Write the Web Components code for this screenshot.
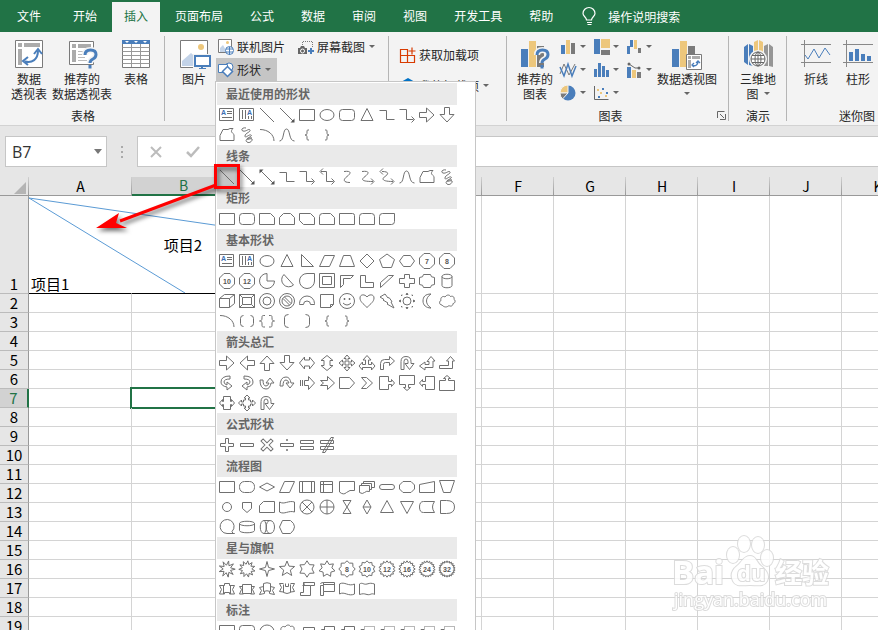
<!DOCTYPE html>
<html lang="zh-CN">
<head>
<meta charset="utf-8">
<title>Excel</title>
<style>
html, body {
  margin: 0;
  height: 100%;
  overflow: hidden;
}
body {
  font: 12px/15px "Noto Sans CJK SC", sans-serif;
  color: #262626;
}
</style>
</head>
<body>
<excel-app></excel-app>

<script>
var BLUE = "#4a7ebb", TAN = "#edc77c", GREY = "#7a7a7a";

// Small outline shapes, drawn on a 20x20 cell.
// A string that starts with "M" is path data, anything else is svg markup.
var poly = pts => "M" + pts.map(p => p.map(n => n.toFixed(2)).join(" ")).join("L") + "z";

var star = function(n, outer, inner, turn = 0, cx = 10, cy = 10) {
  var pts = [];
  for (var i = 0; i < n * 2; i++) {
    var r = i % 2 ? inner : outer;
    var a = Math.PI * i / n - Math.PI / 2 + turn;
    pts.push([cx + r * Math.cos(a), cy + r * Math.sin(a)]);
  }
  return poly(pts);
};

var path = (d, extra = "") => `<path d="${d}" ${extra}/>`;
var label = t => `<text x="10" y="12.5" text-anchor="middle">${t}</text>`;
var octagon = "M7 2.5h6l4.5 4.5v6l-4.5 4.5h-6l-4.5-4.5v-6z";
var numbered = t => path(octagon) + label(t);
var seal = (n, t) => path(star(n, 8.2, 6.4)) + label(t);
var turned = (deg, d) => `<g transform="rotate(${deg} 10 10)">${path(d)}</g>`;

var textbox = path("M2.5 3.5h14v12h-14zM10 6.5h5M10 8.5h5M5 12.5h10") + `<text x="4" y="10" class="a">A</text>`;
var vtextbox = path("M2.5 3.5h14v12h-14zM5.5 5v9M8.5 5v9M11.5 11v3M14.5 11v3") + `<text x="10" y="10" class="a">A</text>`;
var right = "M2.5 7.5h7v-4.5l7.5 7-7.5 7v-4.5h-7z";
var line = "M3 3l14 14";
var lineArrow = path(line) + path("M17.5 17.5h-4l4-4z", 'class="f"');
var elbow = "M2.5 5.5h7v9h8";
var elbowArrow = "M2.5 4.5h7v10h7M14.5 11.5l3 3-3 3";
var elbowBoth = "M4 4.5h5.5v10h7M14.5 11.5l3 3-3 3M6 1.5l-3 3 3 3";
var curve = "M7 4.5c8-1 7 2 3 5s-4 6 3 6";
var curveArrow = "M5 4.5c8-1 7 2 3 5s-4 5 8 5M14 11.5l3 3-3 3";
var curveBoth = "M5 4.5c8 0 6 3 3 5s-4 5 8 5M14 11.5l3 3-3 3M6 1.5l-3 3 3 3";
var freeform = "M3 10.5l3-6h5l2-1h3c-3 3-1 4 1 6v6h-14z";
var scribble = "M9 3c-3-1-6 2-3 3s6-3 7-1-5 3-5 6 4-2 6-1-4 3-4 4 4-1 5 0-2 5-5 3 2-5 5-4";
var arc = "M3 4.5c8 0 14 5 14 11.500";
var wave = "M2.5 16c5 0 3-12 7-12s2 12 8 12";
var lbrace = "M12 5c-2 0-2 0-2 2s0 3-2 3c2 0 2 1 2 3s0 2 2 2";
var rbrace = "M8 5c2 0 2 0 2 2s0 3 2 3c-2 0-2 1-2 3s0 2-2 2";
var rect = "M2.5 4.5h15v11h-15z";
var rounded = '<rect x="2.5" y="4.5" width="15" height="11" rx="3"/>';
var ellipse = '<ellipse cx="10" cy="10" rx="7" ry="5.5"/>';
var triangle = "M10 3.5l6 12h-12z";
var cloud = "M5 14c-3 0-3-4-1-4.500c-1-3 2-5 4-3.500c2-3 5-2 5.500-.5c3-1 4 1 3.500 3c2 1 1 4-1 4c0 3-3 3-4 2c-2 2-5 2-7-.5z";
var uturn = "M4 16.5v-8q0-5 5-5t5 5v2h3l-4.500 6-4.500-6h3v-2q0-2.500-2-2.500t-2 2.500v8z";
var bend = "M3.5 16.5v-6q0-4 4-4h5v-3l5 4.500-5 4.500v-3h-4q-2 0-2 2v5z";
var swoop = "M13 3q-9 0-9 6 0 4 6 5v3l5-4-5-4v3q-3-1-3-3 0-3 6-3z";
var ribbon = "M2.5 6.5h5v-2h5v2h5l-2 4 2 4.500h-5v-1.500h-5v1.500h-5l2-4.500zM6.500 6.500v8.500M13.500 6.500v8.500";
var banner = "M5.5 5.5h9v9h-9zM5.500 7.500h-3l2 3-2 4.500h4v-1M14.500 7.500h3l-2 3 2 4.500h-4v-1";
var lineCallout = path("M6.5 6.5h11v9h-11zM6.500 9.500h-3v7");
var lineCallout2 = path("M7.5 5.5h10v9h-10zM7.500 8.500h-3l-2 7");
var dashedCallout = path("M7.5 5.5h10v9h-10z", 'stroke-dasharray="1 1"') + path("M7 8.500h-3l-2 7");

var SECTIONS = [
  ["最近使用的形状", [
    textbox, vtextbox, line, lineArrow, rect, ellipse, rounded, triangle, elbow, elbowArrow, right, turned(90, right),
    freeform, scribble, arc, wave, lbrace, rbrace
  ]],
  ["线条", [line, lineArrow, lineArrow + path("M2.5 2.5h4l-4 4z", 'class="f"'), elbow, elbowArrow, elbowBoth, curve, curveArrow, curveBoth, wave, freeform, scribble]],
  ["矩形", [
    rect, rounded, "M2.5 4.5h11l4 4v7h-15z", "M6.5 4.5h7l4 4v7h-15v-7z", "M2.5 4.5h11l4 4v7h-11l-4-4z",
    "M5.5 4.5h8l4 4v7h-15v-8q0-3 3-3z", "M2.5 4.5h13q2 0 2 2v9h-15z",
    "M5.5 4.5h9q3 0 3 3v8h-15v-8q0-3 3-3z", "M5.5 4.5h12v8q0 3-3 3h-12v-8q0-3 3-3z"
  ]],
  ["基本形状", [
    textbox, vtextbox, ellipse, triangle, "M4.5 3.5v12h12z", "M7.5 4.5h10l-5 11h-10z", "M6.5 4.5h7l4 11h-15z",
    "M10 3l7 7-7 7-7-7z", "M10 3l7.500 5.500-3 8h-9l-3-8z", "M6.5 4.5h7l4 5.500-4 5.500h-7l-4-5.500z", numbered(7), numbered(8),
    numbered(10), numbered(12), "M10 2.5a7.500 7.500 0 1 0 7.500 7.500h-7.500z", "M7 3.5a7 7 0 1 0 9.500 10.500z", "M10 2.5h7.500v7.500a7.500 7.500 0 1 1-7.500-7.500z",
    "M2.5 2.5h15v14h-15zM5.500 5.500h9v8h-9z", "M3.5 4.5h13l-3 3h-7v6l-3 3z", "M3.5 4.5h5v7h8v5h-13z", "M3.5 11.5l8-7h5l-13 12z",
    "M7.5 3.5h5v4h5v5h-5v4h-5v-4h-5v-5h5z", "M6.5 3.5h7q0 3 4 3v7q-4 0-4 3h-7q0-3-4-3v-7q4 0 4-3z",
    "M5 5.5v9c0 3 10 3 10 0v-9c0-3-10-3-10 0c0 3 10 3 10 0",
    "M2.5 7.5h10v9h-10zM2.5 7.5l5-4h10l-5 4M17.5 3.5v9l-5 4", "M2.5 3.5h15v13h-15zM5.500 6.500h9v7h-9zM2.500 3.500l3 3M17.500 3.500l-3 3M2.500 16.500l3-3M17.500 16.500l-3-3",
    '<circle cx="10" cy="10" r="7.5"/><circle cx="10" cy="10" r="4"/>', '<circle cx="10" cy="10" r="7.5"/><circle cx="10" cy="10" r="5"/><path d="M6 7.5l6.500 6.500M7.500 6l6.500 6.500"/>',
    "M2.5 13.5v-1a7.500 7.500 0 0 1 15 0v1h-4a3.500 3.500 0 0 0-7 0z", "M3.5 3.5h13v10l-3 3h-10zM13.500 16.500v-3h3",
    '<circle cx="10" cy="10" r="7.5"/><path d="M6 12q4 4 8 0M7 7.500h1v1h-1zM12 7.500h1v1h-1z"/>',
    "M10 16.5c-4-4-7-6-7-9.500c0-4 5-4 7-1c2-3 7-3 7 1c0 3.500-3 5.500-7 9.500z", "M3 6l5-3 3 4 1-.5 3 4-1 .5 3 6-7-4 1-1-5-3 1-.5z",
    '<circle cx="10" cy="10" r="4"/><path d="M9 3.500l1-1.500 1 1.500zM9 16.500l1 1.500 1-1.500zM3.500 9l-1.500 1 1.500 1zM16.500 9l1.500 1-1.500 1zM4.500 5v-1h1M14.500 4h1v1M4.500 15v1h1M15.500 15v1h-1"/>',
    "M14 3c-6 0-8 3-8 7s3 7 8 7c-6-4-6-10 0-14z", cloud,
    arc, "M6.5 4.5q-3 0-3 3v5q0 3 3 3M13.500 4.500q3 0 3 3v5q0 3-3 3", "M8 4.5c-3 0-3 0-3 2.500s-1 3-2.500 3c1.500 0 2.500 0 2.500 3s0 3 3 3M12 4.500c3 0 3 0 3 2.500s1 3 2.500 3c-1.500 0-2.500 0-2.500 3s0 3-3 3",
    "M11.5 3.5q-4 0-4 3v7q0 3 4 3", "M8.5 3.5q4 0 4 3v7q0 3-4 3", lbrace, rbrace
  ]],
  ["箭头总汇", [
    right, turned(180, right), turned(270, right), turned(90, right), "M2.5 10l5-6v3h5v-3l5 6-5 6v-3h-5v3z", turned(90, "M2.5 10l5-6v3h5v-3l5 6-5 6v-3h-5v3z"),
    "M10 2l3 3.500h-2v3.500h3.500v-2l3.500 3-3.500 3v-2h-3.500v3.500h2l-3 3.500-3-3.500h2v-3.500h-3.500v2l-3.500-3 3.500-3v2h3.500v-3.500h-2z",
    "M10 2.5l4 4.500h-2.500v4.500h3v-2.500l3.500 4-3.500 4v-2.500h-9v2.500l-3.500-4 3.500-4v2.500h3v-4.500h-2.500z", bend, uturn,
    "M14 3.5l4 4.500h-2v6.500h-8v2.500l-5.500-4 5.500-4v2.500h4v-3h-2z", "M13.5 3.5l4 4.500h-2v7.500h-13v-3h9v-4.500h-2z",
    swoop, `<g transform="matrix(-1 0 0 1 20 0)">${path(swoop)}</g>`, turned(270, swoop), `<g transform="matrix(0 1 1 0 0 0)">${path(swoop)}</g>`,
    "M7.5 7.5h4v-4l6 6.500-6 6.500v-4h-4zM3.500 7v6M5.500 7v6", "M3.5 7.5h7v-4l7 6.500-7 6.500v-4h-7l3-2.500z", "M2.5 4.5h10l5 5.500-5 5.500h-10z", "M4.5 4.5h5l6 5.500-6 5.500h-5l5-5.500z",
    "M2.5 3.5h9v5h3v-2l3 3.500-3 3.500v-2h-3v5h-9z", "M2.5 2.5h15v9h-6v3h2l-3.500 3-3.500-3h2v-3h-6z", "M17.5 3.5h-9v5h-3v-2l-3 3.500 3 3.500v-2h3v5h9z", "M2.5 17.5h15v-10h-6v-2h2l-3.500-3-3.500 3h2v2h-6z",
    "M6.5 3.5h7v5h1v-2l3 3.500-3 3.500v-2h-1v5h-7v-5h-1v2l-3-3.500 3-3.500v2h1z", "M10 2l3 3h-1.500v2h2v2h2v-2l3 3-3 3v-2h-2v2h-2v2h1.500l-3 3-3-3h1.500v-2h-2v-2h-2v2l-3-3 3-3v2h2v-2h2v-2h-1.500z", uturn
  ]],
  ["公式形状", [
    "M8.5 3.5h3v5h5v3h-5v5h-3v-5h-5v-3h5z", "M3.5 8.5h13v3h-13z", turned(45, "M8.5 3h3v5.500h5.500v3h-5.500v5.500h-3v-5.500h-5.500v-3h5.500z"),
    "M3.5 8.5h13v3h-13zM9.500 4.500h1v1h-1zM9.500 14.500h1v1h-1z", "M3.5 5.5h13v3h-13zM3.500 11.500h13v3h-13z", "M3.5 5.5h13v3h-13zM3.500 11.500h13v3h-13zM14 2.500h2.500l-8.500 15h-2.500z"
  ]],
  ["流程图", [
    rect, '<rect x="2.5" y="4.5" width="15" height="11" rx="5"/>', "M2.5 10l7.500-4 7.500 4-7.500 4z", "M7.5 4.5h10l-5 11h-10z", "M2.5 4.5h15v11h-15zM5.500 4.500v11M14.500 4.500v11", "M3.5 4.5h12v11h-12zM6.500 4.500v11M3.500 7.500h12",
    "M2.5 4.5h15v9q-5-1-8 2t-7-.5z", "M2.5 8.5h10v6q-3-1-5 1t-5 0zM4.500 8v-1.500h10v6h-2M6.500 6v-1.500h11v6h-2.500", '<rect x="2.5" y="7.5" width="15" height="5" rx="2.5"/>',
    "M6 4.5h8l3.500 3.500v4l-3.500 3.500h-8l-3.500-3.500v-4z", "M2.5 7.5l15-3v11h-15z", "M2.5 3.5h15l-4 12h-7z",
    '<circle cx="10" cy="10" r="4.5"/>', "M5.5 5.5h9v6l-4.500 4-4.500-4z", "M6.5 4.5h11v11h-15v-7z", "M2.5 5c5 3 9-2 15 0v10c-6-2-10 3-15 0z",
    '<circle cx="10" cy="10" r="7"/><path d="M5 5l10 10M15 5l-10 10"/>', '<circle cx="10" cy="10" r="7"/><path d="M10 3v14M3 10h14"/>', "M6 3.5h8l-8 13h8z",
    "M10 3l4 7-4 7-4-7zM6 10h8", "M10 3.5l6.500 12h-13z", "M3.5 4.5h13l-6.500 12z", "M6.5 4.5h11q-4 5.500 0 11h-11q-4 0-4-5.500t4-5.500z", "M3.5 3.5h6q8 0 8 6.500t-8 6.500h-6z",
    "M10 16.5a7 7 0 1 1 5-2l1 2h1.500M10 16.500h7.500", "M2.5 6.5v7c0 3 15 3 15 0v-7c0-3-15-3-15 0c0 3 15 3 15 0", "M7 3.5h6c6 0 6 13 0 13h-6c-5 0-5-13 0-13M13 3.5c-5 0-5 13 0 13M7 3.5c3 2 3 11 0 13", "M5.5 3.5h8q8 6 0 13h-8l-3-6.500z"
  ]],
  ["星与旗帜", [
    star(9, 8.2, 3.8, .2), star(11, 8.2, 4.8, .1), star(4, 7.5, 2.2), star(5, 8, 3.5), star(6, 8.2, 5), star(7, 8.2, 5),
    seal(8, 8), seal(10, 10), seal(14, 12), seal(16, 16), seal(19, 24), seal(22, 32),
    ribbon, banner, "M6.5 4.5q3.500-1.500 7 0v8q-3.500-1.500-7 0zM6.500 7.500l-4 1 2 3-2 4 5-1v-2M13.500 7.500l4 1-2 3 2 4-5-1v-2", "M6.5 5.5v8q3.500 2 7 0v-8M6.500 4.500h-4l2 4-2 4 4 .5M13.500 4.500h4l-2 4 2 4-4 .5M8.500 4.500v3h3v-3",
    "M6.5 3.5h11v3h-4v10h-10v-3h3zM6.500 3.500q2 3-1 3M6.500 6.500h7", "M3.5 6.5h3v-3h11v9h-11v4h-3zM6.500 6.500v6M3.500 5q0-1.500 3-1.500M6.500 5.500h11",
    "M2.5 5c5-3 9 3 15 0v10c-6 3-10-3-15 0z", "M2.5 5c3-2 4 1 7.500 0s4-1 7.500 0v10.500c-3-2-4 1-7.500 0s-4-1-7.500 0z"
  ]],
  ["标注", [
    rect, rounded, '<ellipse cx="10" cy="10.5" rx="7" ry="6.5"/>', cloud, lineCallout, lineCallout2, lineCallout2,
    dashedCallout, dashedCallout, dashedCallout, dashedCallout, dashedCallout
  ]]
];

// Ribbon pictures. Values hold [width, height, markup].
var pivotArrows = `<path d="M11 22.500c7 2 13-2 13-11" fill="none" stroke="${BLUE}" stroke-width="2"/><path d="M20 15l4-5 4 5M14 18l-5 4 5 4" fill="none" stroke="${BLUE}" stroke-width="2"/>`;
var question = x => `<g transform="translate(${x} 10)"><path d="M2 6q0-5 5.500-5t5.500 4.500q0 3-3 4.500t-3 4" fill="none" stroke="#f3f3f3" stroke-width="6"/><path d="M2 6q0-5 5.500-5t5.500 4.500q0 3-3 4.500t-3 4M7 16v3.500" fill="none" stroke="${BLUE}" stroke-width="3"/></g>`;
var bars = `<path d="M1 10h7v18h-7z" fill="${BLUE}"/><path d="M9 2h7v26h-7z" fill="${TAN}"/><path d="M17 7h7v21h-7z" fill="${GREY}"/>`;

var ICONS = {
  pivot: [30, 30, `<path d="M1.500 1.500h27v27h-27z" fill="#fff" stroke="${GREY}"/><path d="M4 4h4v4h-4zM10 4h16v4h-16zM4 10h4v16h-4z" fill="#ababab"/>${pivotArrows}`],
  pivotHelp: [30, 30, `<path d="M2.500 2.500h24v23h-24z" fill="#fff" stroke="${GREY}"/><path d="M5 5h4v4h-4zM11 5h13v4h-13zM5 11h4v12h-4z" fill="#ababab"/><path d="M11 12.500h9M11 15.500h7M11 18.500h7M11 21.500h9" stroke="#bbb"/>${question(16)}`],
  table: [30, 30, `<path d="M1.500 1.500h27v27h-27z" fill="#fff" stroke="${GREY}"/><path d="M1.500 8.500h27M1.500 12.500h27M1.500 16.500h27M1.500 20.500h27M1.500 24.500h27M10.500 4v24M19.500 4v24" stroke="#999"/><path d="M1 1h28v4h-28z" fill="${BLUE}"/><path d="M4 2h4l-2 2zM13 2h4l-2 2zM22 2h4l-2 2z" fill="#fff"/>`],
  picture: [32, 30, `<path d="M2.500 1.500h27v27h-27z" fill="#fff" stroke="${GREY}"/><circle cx="23" cy="8" r="3" fill="${TAN}"/><path d="M4 27v-5l9-8 9 8v5z" fill="#c3d3e8"/><path d="M15 15h18v16h-18z" fill="#f3f3f3"/><path d="M17 17h15v10h-15z" fill="#fff" stroke="${BLUE}" stroke-width="2"/><path d="M23 27h2v2h3v1h-7v-1h2z" fill="${BLUE}"/>`],
  online: [16, 16, `<path d="M.5 .5h13v13h-13z" fill="#fff" stroke="${GREY}"/><circle cx="9.500" cy="3.500" r="1.500" fill="${TAN}"/><path d="M2 13v-4l3-3 4 7z" fill="#c3d3e8"/><circle cx="11.500" cy="11.500" r="4" fill="#fff" stroke="${BLUE}"/><path d="M8 10h7M8 13h7M11.500 8v8" stroke="${BLUE}"/>`],
  shapes: [16, 16, `<circle cx="11" cy="5" r="4" fill="#fff" stroke="${BLUE}"/><path d="M.5 2.500h9v8h-9z" fill="#fff" stroke="${BLUE}"/><path d="M9.500 4.500l5 5-5 5-5-5z" fill="#fff" stroke="${BLUE}" stroke-width="1.500"/>`],
  screenshot: [16, 16, `<path d="M4.500 8v-5.500h10v6" fill="none" stroke="${GREY}" stroke-dasharray="1 1"/><path d="M0 9h2l1-2h3l1 2h2v6h-9z" fill="#666"/><circle cx="4.500" cy="12" r="2" fill="#666" stroke="#fff"/><path d="M12 9h2v2h2v2h-2v2h-2v-2h-2v-2h2z" fill="${BLUE}"/>`],
  store: [16, 16, `<path d="M.5 2.500h7v13h-7zM.5 8.500h14v7h-14M12 .5v7M8.500 4h7" fill="none" stroke="#d83b01" stroke-width="1.200"/>`],
  addin: [16, 16, `<path d="M8 0l7 4v8l-7 4-7-4v-8z" fill="#0072c6"/>`],
  chartHelp: [30, 30, `${bars}${question(15)}`],
  column: [16, 16, `<path d="M1 6h4v9h-4z" fill="${BLUE}"/><path d="M6 1h4v14h-4z" fill="${TAN}"/><path d="M11 4h4v11h-4z" fill="${GREY}"/>`],
  tree: [16, 16, `<path d="M1 0h6v15h-6z" fill="${BLUE}"/><path d="M8 0h9v9h-9z" fill="${TAN}"/><path d="M8 11h9v5h-9z" fill="${GREY}"/>`],
  fall: [16, 16, `<path d="M1 7h3v8h-3zM4 1h3v7h-3z" fill="${BLUE}"/><path d="M8 1h3v9h-3z" fill="${TAN}"/><path d="M12 9h3v5h-3z" fill="${GREY}"/>`],
  lines: [16, 16, `<path d="M0 12l4-10 5 11 6-11" fill="none" stroke="${GREY}"/><path d="M0 5l4 9 4-12 4 12 4-10" fill="none" stroke="${BLUE}" stroke-width="1.500"/>`],
  histogram: [16, 16, `<path d="M1 7h3v8h-3zM5 1h3v14h-3zM9 4h3v11h-3zM13 8h3v7h-3z" fill="${BLUE}"/>`],
  combo: [16, 16, `<path d="M1 5h4v11h-4z" fill="${BLUE}"/><path d="M6 8h4v8h-4z" fill="${TAN}"/><path d="M11 10h4v6h-4z" fill="${GREY}"/><path d="M3 2l6 4h5" stroke="#666" fill="none"/><circle cx="3" cy="2" r="1.500" fill="#666"/><circle cx="13" cy="6" r="1.500" fill="#666"/>`],
  pie: [16, 16, `<circle cx="8" cy="8" r="7.500" fill="${BLUE}"/><path d="M8 8v-8a8 8 0 0 0-8 8z" fill="${TAN}" stroke="#f3f3f3"/><path d="M8 8h-8a8 8 0 0 0 2.500 6z" fill="${GREY}" stroke="#f3f3f3"/>`],
  scatter: [16, 16, `<path d="M1.500 1v13.500h14" fill="none" stroke="#666"/><path d="M9 3h2v2h-2zM13 7h2v2h-2zM5 11h2v2h-2z" fill="${BLUE}"/><path d="M4 4h2v2h-2zM7 7h2v2h-2zM12 10h2v2h-2z" fill="${TAN}"/>`],
  pivotChart: [32, 30, `${bars}<path d="M15.500 15.500h15v15h-15z" fill="#fff" stroke="${GREY}"/><path d="M17 17h3v3h-3zM21 17h8v3h-8zM17 21h3v8h-3z" fill="#ababab"/><path d="M21 26.500c4 1 6-1 6-4M25 24l2-2 2 2M23 24l-2 2 2 2" fill="none" stroke="${BLUE}" stroke-width="1.300"/>`],
  map: [30, 30, `<path d="M1 8l4-3v21l-4-3zM6 5l4 2v20l-4-1z" fill="${BLUE}"/><path d="M11 3l4-2v26l-4-2zM16 1l4 2v23l-4 1z" fill="${TAN}"/><path d="M21 7l4-2v22h-4zM26 5l4 3v20l-4-1z" fill="#969696"/><circle cx="15" cy="20" r="9" fill="#f3f3f3"/><circle cx="15" cy="20" r="7" fill="#fff" stroke="#666"/><ellipse cx="15" cy="20" rx="3" ry="7" fill="none" stroke="#666"/><path d="M8 20h14M9 16.500h12M9 23.500h12M15 13v14" stroke="#666"/>`],
  sparkLine: [30, 30, `<path d="M0 5.500h30M0 23.500h30M3.500 1v27" stroke="#888"/><path d="M4 16l3 4 6-10 5 9 6-10 5 7" fill="none" stroke="${BLUE}"/>`],
  sparkColumn: [30, 30, `<path d="M0 5.500h30M0 23.500h30M3.500 1v27" stroke="#888"/><path d="M6 13h4v9h-4zM12 10h4v12h-4zM18 15h4v7h-4zM24 17h4v5h-4z" fill="${BLUE}"/>`],
  bulb: [14, 17, `<path d="M4.500 12c0-3-3.500-3.500-3.500-6.500a5.500 5.500 0 0 1 12 0c0 3-3.500 3.500-3.500 6.500zM5 14.500h5M5.500 16.500h4" fill="none" stroke="#fff" stroke-width="1.200"/>`],
  launcher: [9, 9, `<path d="M.5 7v-6.500h7M3 3l4 4M8.500 3v5.500h-5.500" fill="none" stroke="#666"/>`],
  cancel: [12, 12, `<path d="M1 1l10 10M11 1l-10 10" stroke="#bcbcbc" stroke-width="2"/>`],
  accept: [14, 12, `<path d="M1 6l4 4 8-9" fill="none" stroke="#bcbcbc" stroke-width="2.500"/>`]
};

var define = function(name, render) {
  window.customElements.define(name, class extends HTMLElement {
    constructor() {
      super();
      this.attachShadow({ mode: "open" });
    }

    connectedCallback() {
      this.shadowRoot.innerHTML = render(this);
    }
  });
};

var caret = `<i class="caret"></i>`;
var caretStyle = `.caret { flex: none; border: 3px solid transparent; border-top-color: #666; border-bottom: 0; }`;
var buttonReset = `button { font: inherit; color: inherit; border: 0; margin: 0; padding: 0; background: none; }`;

define("x-icon", function(el) {
  var [w, h, markup] = ICONS[el.getAttribute("name")];
  return `<style>:host { display: block; flex: none; } svg { display: block; overflow: visible; }</style>
    <svg width="${w}" height="${h}" viewBox="0 0 ${w} ${h}" aria-hidden="true">${markup}</svg>`;
});

define("menu-tabs", function() {
  var tabs = ["开始", "插入", "页面布局", "公式", "数据", "审阅", "视图", "开发工具", "帮助"];
  return `<style>
    :host { display: block; background: #217346; color: #fff; }
    nav { display: flex; gap: 3px; height: 32px; padding-top: 2px; box-sizing: border-box; }
    ${buttonReset}
    button { padding: 0 12px 4px; white-space: nowrap; }
    .file { padding: 0 17px 4px; }
    .on { background: #f3f3f3; color: #217346; }
    .tell { display: flex; align-items: center; gap: 12px; padding: 0 0 2px 14px; }
  </style>
  <nav>
    <button class="file">文件</button>
    ${tabs.map(t => `<button${t == "插入" ? ' class="on"' : ""}>${t}</button>`).join("")}
    <button class="tell"><x-icon name="bulb"></x-icon><span>操作说明搜索</span></button>
  </nav>`;
});

define("ribbon-group", function(el) {
  var launcher = el.hasAttribute("launcher") ? `<button aria-label="图表选项"><x-icon name="launcher"></x-icon></button>` : "";
  return `<style>
    :host { display: flex; flex: none; flex-direction: column; box-sizing: border-box; padding: 3px 0 0;
      background: linear-gradient(#b5b5b5, #b5b5b5) no-repeat right 4px / 1px 85px; }
    :host([last]) { background: none; }
    ${buttonReset}
    .body { display: flex; align-items: flex-start; height: 72px; }
    footer { display: flex; align-items: center; height: 16px; }
    span { flex: 1; text-align: center; min-height: 15px; }
    :host([launcher]) span { padding-right: 8px; }
    button { width: 12px; }
  </style>
  <div class="body"><slot></slot></div>
  <footer><span>${el.getAttribute("label") || ""}</span>${launcher}</footer>`;
});

define("big-button", function(el) {
  return `<style>
    :host { display: block; flex: none; }
    ${buttonReset} ${caretStyle}
    button { display: flex; flex-direction: column; align-items: center; width: 100%; padding-top: 4px; }
    .text { margin-top: 2px; white-space: nowrap; display: flex; flex-direction: column; align-items: center; }
    .row { display: flex; align-items: center; gap: 5px; min-height: 15px; }
  </style>
  <button>
    <x-icon name="${el.getAttribute("icon")}"></x-icon>
    <span class="text"><slot></slot>
    ${el.hasAttribute("menu") ? `<span class="row"><slot name="second"></slot>${caret}</span>` : ""}</span>
  </button>`;
});

define("small-button", function(el) {
  return `<style>
    :host { display: block; }
    ${buttonReset} ${caretStyle}
    button { display: flex; align-items: center; gap: 3px; height: 23px; padding: 0 6px 0 2px; white-space: nowrap; }
    :host([open]) button { background: #c5c5c5; }
    .caret { margin-left: 1px; }
  </style>
  <button aria-label="${el.getAttribute("hint") || el.textContent}"><x-icon name="${el.getAttribute("icon")}"></x-icon><slot></slot>${el.hasAttribute("menu") ? caret : ""}</button>`;
});

define("shape-gallery", function() {
  var draw = s => s[0] == "M" ? path(s) : s;
  return `<style>
    :host { display: block; box-sizing: border-box; width: 261px; padding: 1px 0 0 1px; overflow: hidden;
      background: #fff; border: 1px solid #c6c6c6; border-bottom: 0; }
    h2 { margin: 0; width: 231px; padding-left: 9px; font-size: 12px; line-height: 22px; font-weight: 700; color: #666; background: #eaeaea; }
    div { display: flex; flex-wrap: wrap; width: 240px; }
    ${buttonReset}
    button { display: block; width: 20px; height: 20px; }
    .hot { background: #c5c5c5; }
    svg { display: block; fill: none; stroke: #707070; }
    .f { fill: #555; stroke: none; }
    text { stroke: none; fill: #555; font: bold 7px "Liberation Sans", sans-serif; }
    .a { fill: #3c6eb4; }
  </style>
  ${SECTIONS.map(([title, shapes]) => `<h2>${title}</h2><div>${
    shapes.map((s, i) => `<button aria-label="${title} ${i + 1}"${title == "线条" && !i ? ' class="hot"' : ""}><svg width="20" height="20" viewBox="0 0 20 20">${draw(s)}</svg></button>`).join("")
  }</div>`).join("")}`;
});

define("excel-ribbon", function() {
  var charts = [["column", "柱形图"], ["tree", "层次结构图"], ["fall", "瀑布图"], ["lines", "折线图"], ["histogram", "统计图"], ["combo", "组合图"], ["pie", "饼图"], ["scatter", "散点图"]];
  return `<style>
    :host { display: flex; height: 93px; background: #f3f3f3; border-bottom: 1px solid #d2d2d2; }
    .stack { display: flex; flex-direction: column; }
    .apps { gap: 8px; padding-top: 8px; }
    .charts { display: grid; grid-template-columns: repeat(3, 33px); }
    .tables { padding-left: 6px; padding-right: 5px; }
    .pictures { padding-left: 7px; width: 224px; }
    .addins { padding-left: 9px; width: 118px; }
    .plots { padding-left: 5px; width: 222px; }
    .demo { padding-left: 3px; padding-right: 3px; }
    .spark { padding-left: 8px; width: 132px; }
    .w42 { width: 42px; } .w44 { width: 44px; } .w46 { width: 46px; } .w48 { width: 48px; } .w52 { width: 52px; } .w60 { width: 60px; }
    .anchor { position: relative; width: 80px; }
    shape-gallery { position: absolute; z-index: 2; top: 100%; left: -1px; height: calc(100vh - 81px); }
  </style>
  <ribbon-group class="tables" label="表格">
    <big-button class="w46" icon="pivot"><span>数据</span><span>透视表</span></big-button>
    <big-button class="w60" icon="pivotHelp"><span>推荐的</span><span>数据透视表</span></big-button>
    <big-button class="w48" icon="table"><span>表格</span></big-button>
  </ribbon-group>
  <ribbon-group class="pictures">
    <big-button class="w44" icon="picture"><span>图片</span></big-button>
    <div class="stack">
      <small-button icon="online">联机图片</small-button>
      <div class="anchor">
        <small-button icon="shapes" menu open>形状</small-button>
        <shape-gallery></shape-gallery>
      </div>
    </div>
    <small-button icon="screenshot" menu>屏幕截图</small-button>
  </ribbon-group>
  <ribbon-group class="addins">
    <div class="stack apps">
      <small-button icon="store">获取加载项</small-button>
      <small-button icon="addin" menu>我的加载项</small-button>
    </div>
  </ribbon-group>
  <ribbon-group class="plots" label="图表" launcher>
    <big-button class="w46" icon="chartHelp"><span>推荐的</span><span>图表</span></big-button>
    <div class="charts">${charts.map(([icon, hint]) => `<small-button icon="${icon}" hint="${hint}" menu></small-button>`).join("")}</div>
    <big-button class="w60" icon="pivotChart" menu><span>数据透视图</span></big-button>
  </ribbon-group>
  <ribbon-group class="demo" label="演示">
    <big-button class="w52" icon="map" menu><span>三维地</span><span slot="second">图</span></big-button>
  </ribbon-group>
  <ribbon-group class="spark" label="迷你图" last>
    <big-button class="w42" icon="sparkLine"><span>折线</span></big-button>
    <big-button class="w42" icon="sparkColumn"><span>柱形</span></big-button>
  </ribbon-group>`;
});

define("formula-bar", function() {
  return `<style>
    :host { display: flex; align-items: center; padding: 10px 0 10px 5px; background: #e6e6e6; }
    .name, .formula { display: flex; align-items: center; box-sizing: border-box; height: 31px; background: #fff; border: 1px solid #c6c6c6; }
    .name { width: 102px; padding: 0 4px 0 6px; }
    .formula { flex: 1; border-right: 0; padding-left: 12px; gap: 24px; }
    input { flex: 1; min-width: 0; border: 0; padding: 0; background: none; color: #333; font: 16px "Open Sans", sans-serif; }
    ${buttonReset}
    .caret { display: block; border: 4px solid transparent; border-top: 5px solid #777; border-bottom: 0; }
    .grip { width: 30px; display: grid; justify-content: center; gap: 3px; }
    .grip i { width: 2px; height: 2px; background: #aaa; }
  </style>
  <div class="name"><input aria-label="名称框" value="B7"><button aria-label="名称列表"><i class="caret"></i></button></div>
  <div class="grip"><i></i><i></i><i></i></div>
  <div class="formula">
    <button aria-label="取消"><x-icon name="cancel"></x-icon></button>
    <button aria-label="输入"><x-icon name="accept"></x-icon></button>
    <input aria-label="编辑栏">
  </div>`;
});

define("sheet-grid", function() {
  var widths = [103, 103, 103, 72, 72, 72, 72, 72, 72, 72, 72];
  var letters = [..."ABCDEFGHIJK"];
  var cells = { A1: "项目1", B1: "项目2" };
  var rows = "";
  for (let r = 1; r <= 19; r++) {
    rows += `<tr class="r${r}"><th scope="row">${r}</th>${letters.map(c => {
      var id = c + r;
      var lines = id == "A1" ? `<svg width="206" height="98" aria-hidden="true"><path d="M0 2l206 30M0 2l156 95"/></svg>` : "";
      return `<td class="${id}">${cells[id] || ""}${lines}</td>`;
    }).join("")}</tr>`;
  }
  return `<style>
    :host { display: block; flex: 1; min-height: 0; overflow: hidden; background: #fff; }
    table { table-layout: fixed; width: 914px; border-collapse: separate; border-spacing: 0; font-size: 15px; line-height: 18px; color: #000; }
    th, td { box-sizing: border-box; height: 19px; padding: 0; font-weight: 400; }
    td { position: relative; border-right: 1px solid #d4d4d4; border-bottom: 1px solid #d4d4d4; }
    th { background: #e6e6e6; }
    thead th { border-bottom: 1px solid #999; background: linear-gradient(#d0d0d0, #999) no-repeat right / 1px 100% #e6e6e6; font-size: 14px; }
    thead .on { background-color: #d2d2d2; color: #217346; border-bottom: 2px solid #217346; line-height: 17px; }
    tbody th { border-right: 1px solid #999; border-bottom: 1px solid #bbb; vertical-align: bottom; }
    .corner { text-align: right; }
    .corner i { display: inline-block; margin-right: 3px; border: 6px solid #b4b4b4; border-top-color: transparent; border-left-color: transparent; vertical-align: middle; }
    .r1 th, .r1 td { height: 98px; }
    .r7 th { background: #d2d2d2; color: #217346; border-right: 2px solid #217346; }
    .A1, .B1 { border-right-color: transparent; border-bottom-color: #000; }
    .A1 { vertical-align: bottom; padding-left: 2px; }
    .B1 { text-align: center; vertical-align: middle; }
    .A1 svg { position: absolute; left: 0; top: 0; overflow: visible; fill: none; stroke: #5b9bd5; }
    .B7::after { content: ""; position: absolute; inset: -2px; border: 2px solid #217346; }
  </style>
  <table>
    <colgroup><col style="width: 29px">${widths.map(w => `<col style="width: ${w}px">`).join("")}</colgroup>
    <thead><tr><th class="corner"><i></i></th>${letters.map(c => `<th scope="col"${c == "B" ? ' class="on"' : ""}>${c}</th>`).join("")}</tr></thead>
    <tbody>${rows}</tbody>
  </table>`;
});

// red frame round the line tool, with an arrow to the cell
define("call-out", function() {
  return `<style>
    :host { position: absolute; z-index: 3; left: 90px; top: 160px; pointer-events: none; }
    svg { display: block; overflow: visible; filter: drop-shadow(2px 3px 2px rgba(0, 0, 0, .55)); }
  </style>
  <svg width="160" height="80" aria-hidden="true">
    <path d="M125.500 5.500h23v22h-23z" fill="none" stroke="#f00" stroke-width="3"/>
    <path d="M126 25l-96 36" stroke="#f00" stroke-width="3"/>
    <path d="M6 68l23-15-3 10 11 5z" fill="#f00"/>
  </svg>`;
});

define("water-mark", function() {
  return `<style>
    :host { position: absolute; left: 670px; top: 532px; pointer-events: none; opacity: .85; }
    svg { display: block; overflow: visible; }
    text, g { fill: #fff; stroke: #d6d6d6; stroke-width: 2px; paint-order: stroke; font-family: "Open Sans", "Noto Sans CJK SC", sans-serif; }
  </style>
  <svg width="166" height="82">
    <g>
      <path d="M80 24c-6 0-8 6-13 10s-7 9-4 15 9 4 17 4 14 2 17-4-1-11-6-15-5-10-11-10z"/>
      <ellipse cx="63" cy="23" rx="6" ry="8"/><ellipse cx="74" cy="12" rx="6" ry="8"/>
      <ellipse cx="88" cy="13" rx="6" ry="8"/><ellipse cx="97" cy="26" rx="6" ry="8"/>
    </g>
    <text x="2" y="52" font-size="33" font-weight="700">Bai</text>
    <text x="67" y="49" font-size="22" font-weight="700">du</text>
    <text x="105" y="51" font-size="27" font-weight="700">经验</text>
    <text x="4" y="74" font-size="18">jingyan.baidu.com</text>
  </svg>`;
});

define("excel-app", function() {
  return `<style>
    :host { display: flex; flex-direction: column; position: relative; height: 100vh; overflow: hidden; background: #e6e6e6; }
    menu-tabs, excel-ribbon, formula-bar { flex: none; }
  </style>
  <menu-tabs></menu-tabs>
  <excel-ribbon></excel-ribbon>
  <formula-bar></formula-bar>
  <sheet-grid></sheet-grid>
  <water-mark></water-mark>
  <call-out></call-out>`;
});
</script>
</body>
</html>
